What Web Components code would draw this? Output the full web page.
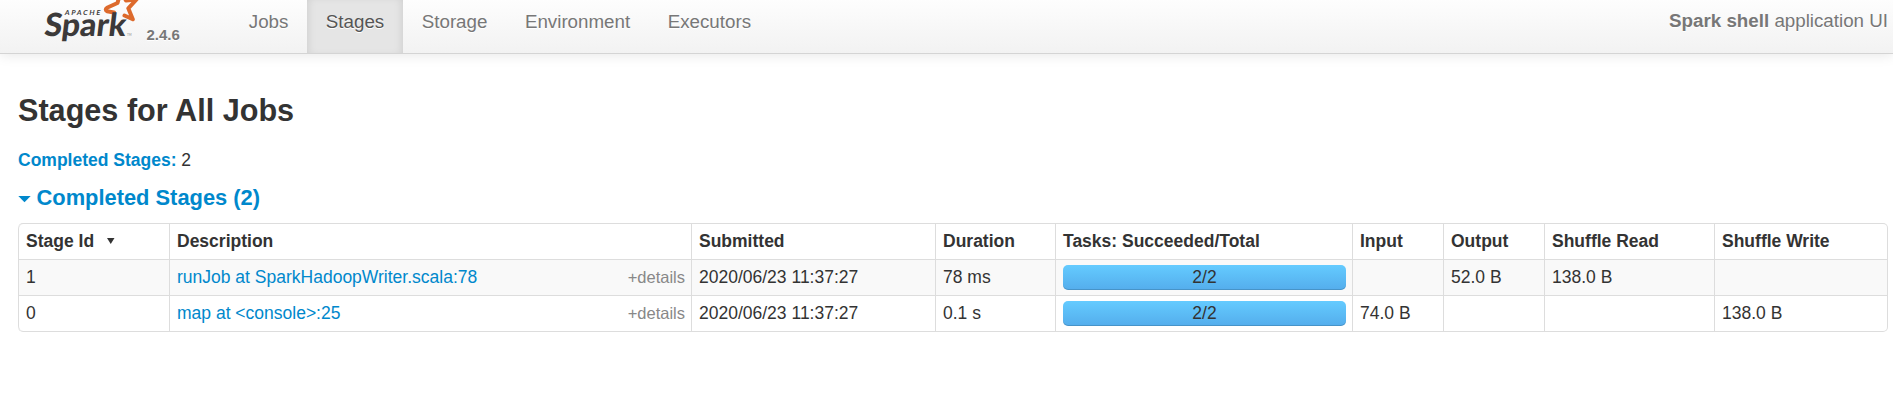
<!DOCTYPE html>
<html lang="en"><head><meta charset="utf-8"><title>Spark shell - Stages for All Jobs</title>
<style>
body{margin:0;background:#fff;color:#333;font:17.5px/25px "Liberation Sans",Arial,sans-serif;overflow:hidden}
</style></head><body>
<spark-navbar version="2.4.6">
<nav-item>Jobs</nav-item><nav-item active>Stages</nav-item><nav-item>Storage</nav-item><nav-item>Environment</nav-item><nav-item>Executors</nav-item>
<span slot="app"><b>Spark shell</b> application UI</span>
</spark-navbar>
<stages-page></stages-page>
<script>
const define=(name,html,setup)=>customElements.define(name,class extends HTMLElement{
  connectedCallback(){
    if(this.shadowRoot)return;
    const t=document.createElement('template');t.innerHTML=html;
    this.attachShadow({mode:'open'}).append(t.content.cloneNode(true));
    if(setup)setup(this,this.shadowRoot);
  }
});
define('spark-logo',`<style>:host{display:block;width:100px;height:54px;text-shadow:none}svg{display:block;overflow:visible}</style>
<svg width="100" height="54" viewBox="40 0 100 54">
<g fill="none" stroke="#dd6a2c" stroke-width="4" stroke-linejoin="round" stroke-linecap="round">
<path d="M120 -6L117.500 3L107 7.800Q104.500 9.500 107 11.200L114 12.500M123 -5L126 .5L136.500 -.500L128.300 8.300L132.800 19.300L124.500 15.500"/></g>
<g fill="#3c3a3a" font-family="Lato,sans-serif">
<text transform="translate(64.500 15) skewX(-10)" font-size="6.800" font-weight="700" textLength="35.500">APACHE</text>
<text transform="translate(43.500 35.700) skewX(-7)" font-size="32" font-weight="900" textLength="81.500" lengthAdjust="spacingAndGlyphs">Spark</text>
<text x="127" y="35.500" font-size="3" fill="#888">TM</text></g></svg>`);
define('nav-item',`<style>
:host{display:block;height:62px;box-sizing:border-box;padding:17px 18.75px 0;font-size:18.75px;line-height:25px;color:#777;text-shadow:0 1px 0 #fff;white-space:nowrap}
:host([active]){color:#555;background:#e5e5e5;box-shadow:inset 0 3.75px 10px rgba(0,0,0,.125)}
</style><slot></slot>`);
define('spark-navbar',`<style>
:host{display:block;height:70px;overflow:hidden;color:#777;text-shadow:0 1px 0 #fff}
.bar{display:flex;height:61px;margin-top:-8px;background:linear-gradient(#fff,#f2f2f2);border-bottom:1px solid #d4d4d4;box-shadow:0 1px 12.5px rgba(0,0,0,.1)}
spark-logo{margin:8px 0 0 40px}
.v{width:90px;box-sizing:border-box;padding:30px 0 0 6.500px;font-size:15px;font-weight:bold}
nav{display:flex;height:61px;overflow:hidden}
.app{margin:16px 5px 0 auto;font-size:18.75px}
</style><div class="bar"><spark-logo></spark-logo><span class="v"></span><nav><slot></slot></nav><div class="app"><slot name="app"></slot></div></div>`,
(h,r)=>r.querySelector('.v').textContent=h.getAttribute('version'));
define('task-progress',`<style>
:host{display:block;height:25px;box-sizing:border-box;border-radius:5px;text-align:center;line-height:24px;background:linear-gradient(#64cbff,#54adec);box-shadow:inset 0 -1px 0 rgba(0,0,0,.15)}
</style><slot></slot>`);
define('stage-link',`<style>
:host{display:flex;justify-content:space-between}a{color:#08c}span{color:#888;font-size:16.5px}
</style><a><slot></slot></a><span>+details</span>`);
define('stages-table',`<style>
:host{display:block;width:1870px}
table{width:1870px;table-layout:fixed;border-collapse:separate;border-spacing:0;border:1px solid #ddd;border-left:0;border-radius:5px}
th,td{box-sizing:border-box;height:36px;padding:5px 6px 5px 7px;text-align:left;border-left:1px solid #ddd;white-space:nowrap;line-height:25px}
th{height:35px;font-weight:bold}
td{border-top:1px solid #ddd}
.odd td{background:#f9f9f9}
th:first-child{border-top-left-radius:5px}
tr:last-child td:first-child{border-bottom-left-radius:5px}
</style><table><colgroup><col style="width:151px"><col style="width:522px"><col style="width:244px"><col style="width:120px"><col style="width:297px"><col style="width:91px"><col style="width:101px"><col style="width:170px"><col></colgroup>
<thead><tr><th>Stage Id <svg width="8" height="7" style="margin:0 0 2px 8px"><path d="M0 0H7.500L3.750 6Z" fill="#333"/></svg></th><th>Description</th><th>Submitted</th><th>Duration</th><th>Tasks: Succeeded/Total</th><th>Input</th><th>Output</th><th>Shuffle Read</th><th>Shuffle Write</th></tr></thead>
<tbody><tr class="odd"><td>1</td><td><stage-link>runJob at SparkHadoopWriter.scala:78</stage-link></td><td>2020/06/23 11:37:27</td><td>78 ms</td><td><task-progress>2/2</task-progress></td><td></td><td>52.0 B</td><td>138.0 B</td><td></td></tr>
<tr><td>0</td><td><stage-link>map at &lt;console&gt;:25</stage-link></td><td>2020/06/23 11:37:27</td><td>0.1 s</td><td><task-progress>2/2</task-progress></td><td>74.0 B</td><td></td><td></td><td>138.0 B</td></tr></tbody></table>`);
define('stages-page',`<style>
:host{display:block;padding:15px 0 0 18px}
h3{margin:0;font-size:30.625px;line-height:50px}
.sum{margin:13px 0 0}.sum b,h4{color:#08c}
h4{margin:12px 0 13px;font-size:21.875px;line-height:25px;display:flex;align-items:center}
h4 svg{margin:3px 5.500px 0 0}
</style><h3>Stages for All Jobs</h3><div class="sum"><b>Completed Stages:</b> 2</div><h4><svg width="13" height="7"><path d="M.3 0H12.700L6.500 6.300Z" fill="#08c"/></svg>Completed Stages (2)</h4><stages-table></stages-table>`);
</script></body></html>
